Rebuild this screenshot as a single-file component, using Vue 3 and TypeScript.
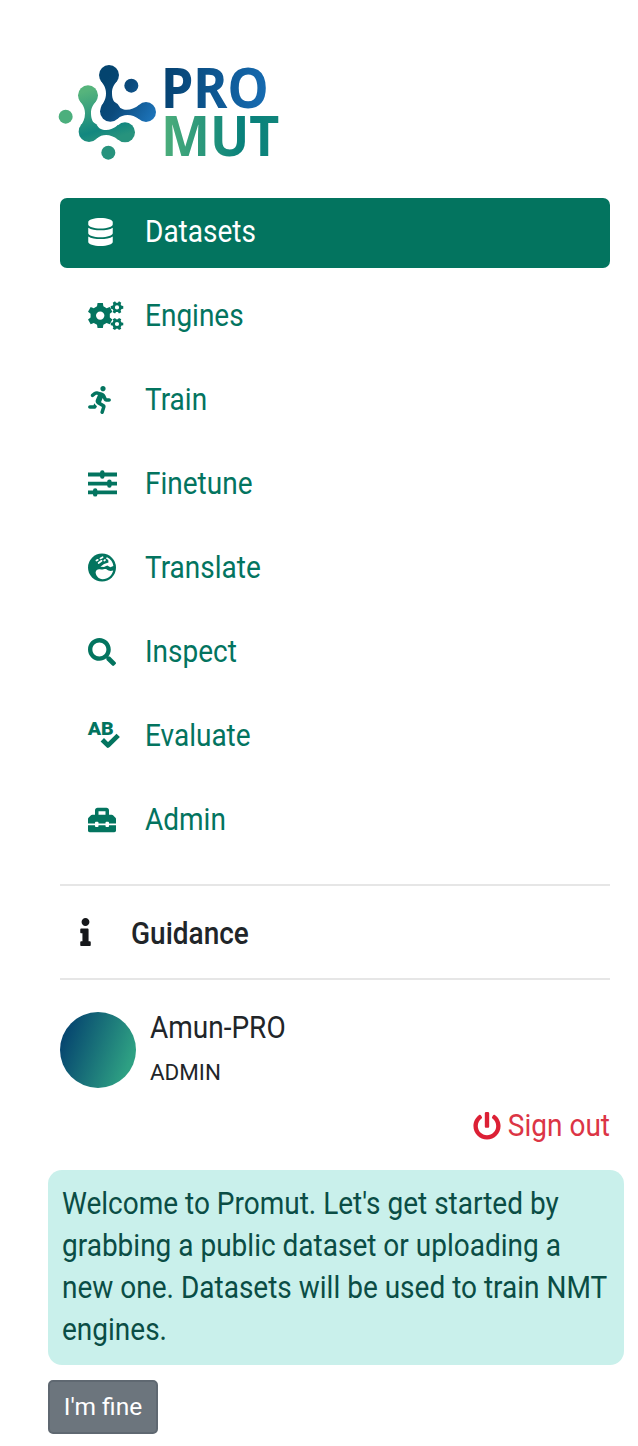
<script setup lang="ts">
interface NavItem {
  label: string
  icon: string
  width: number
  active?: boolean
}

const items: NavItem[] = [
  { label: 'Datasets', icon: 'database', width: 25, active: true },
  { label: 'Engines', icon: 'cogs', width: 35 },
  { label: 'Train', icon: 'running', width: 23 },
  { label: 'Finetune', icon: 'sliders', width: 29 },
  { label: 'Translate', icon: 'globe', width: 28 },
  { label: 'Inspect', icon: 'search', width: 28 },
  { label: 'Evaluate', icon: 'spell', width: 32 },
  { label: 'Admin', icon: 'toolbox', width: 28 },
]

const tipLines: string[] = [
  "Welcome to Promut. Let's get started by",
  'grabbing a public dataset or uploading a',
  'new one. Datasets will be used to train NMT',
  'engines.',
]

const viewBoxes: Record<string, string> = {
  database: '0 0 448 512',
  cogs: '0 0 35 28',
  running: '0 0 416 512',
  sliders: '0 0 29 28',
  globe: '0 0 28 28',
  search: '0 0 512 512',
  spell: '0 0 32 28',
  toolbox: '0 0 512 512',
}

const paths: Record<string, string> = {
  database:
    'M448 73.143v45.714C448 159.143 347.667 192 224 192S0 159.143 0 118.857V73.143C0 32.857 100.333 0 224 0s224 32.857 224 73.143zM448 176v102.857C448 319.143 347.667 352 224 352S0 319.143 0 278.857V176c48.125 33.143 136.208 48.572 224 48.572S399.874 209.143 448 176zm0 160v102.857C448 479.143 347.667 512 224 512S0 479.143 0 438.857V336c48.125 33.143 136.208 48.572 224 48.572S399.874 369.143 448 336z',
  running:
    'M272 96c26.51 0 48-21.49 48-48S298.51 0 272 0s-48 21.49-48 48 21.49 48 48 48zM113.69 317.47l-14.8 34.52H32c-17.67 0-32 14.33-32 32s14.33 32 32 32h77.45c19.25 0 36.58-11.44 44.11-29.09l8.79-20.52-10.67-6.3c-17.32-10.23-30.06-25.37-37.99-42.61zM384 223.99h-44.03l-26.06-53.25c-12.5-25.55-35.45-44.23-61.78-50.94l-71.08-21.14c-28.3-6.8-57.77-.55-80.84 17.14l-39.67 30.41c-14.03 10.75-16.69 30.83-5.92 44.86s30.84 16.66 44.86 5.92l39.69-30.41c7.67-5.89 17.44-8 25.27-6.14l14.7 4.37-37.46 87.39c-12.62 29.48-1.31 64.01 26.3 80.31l84.98 50.17-27.47 87.73c-5.28 16.86 4.11 34.82 20.97 40.09 3.19 1 6.41 1.48 9.58 1.48 13.61 0 26.23-8.77 30.52-22.45l31.64-101.06c5.91-20.77-2.89-43.08-21.64-54.39l-61.24-36.14 31.31-78.28 20.27 41.43c8 16.34 24.92 26.89 43.11 26.89H384c17.67 0 32-14.33 32-32s-14.33-31.99-32-31.99z',
  search:
    'M505 442.7L405.3 343c-4.5-4.5-10.6-7-17-7H372c27.6-35.3 44-79.7 44-128C416 93.1 322.9 0 208 0S0 93.1 0 208s93.1 208 208 208c48.3 0 92.7-16.4 128-44v16.3c0 6.4 2.5 12.5 7 17l99.7 99.7c9.4 9.4 24.6 9.4 33.9 0l28.3-28.3c9.4-9.4 9.4-24.6.1-34zM208 336c-70.7 0-128-57.2-128-128 0-70.7 57.2-128 128-128 70.7 0 128 57.2 128 128 0 70.7-57.2 128-128 128z',
  toolbox:
    'M502.63 214.63l-45.25-45.25c-6-6-14.14-9.37-22.63-9.37H384V80c0-26.51-21.49-48-48-48H176c-26.51 0-48 21.49-48 48v80H77.25c-8.49 0-16.62 3.37-22.63 9.37L9.37 214.63c-6 6-9.37 14.14-9.37 22.63V320h128v-16c0-8.84 7.16-16 16-16h32c8.84 0 16 7.16 16 16v16h128v-16c0-8.84 7.16-16 16-16h32c8.84 0 16 7.16 16 16v16h128v-82.75c0-8.48-3.37-16.62-9.37-22.62zM320 160H192V96h128v64zm64 208c0 8.84-7.16 16-16 16h-32c-8.84 0-16-7.16-16-16v-16H192v16c0 8.84-7.16 16-16 16h-32c-8.84 0-16-7.16-16-16v-16H0v96c0 17.67 14.33 32 32 32h448c17.67 0 32-14.33 32-32v-96H384v16z',
}

// Outline of a six-toothed gear with a round hole.
function gear(cx: number, cy: number, outer: number, inner: number, hole: number, turn: number): string {
  const pts: string[] = []
  for (let i = 0; i < 6; i++) {
    const base = turn + i * 60
    const corners: [number, number][] = [[-19, inner], [-12, outer], [12, outer], [19, inner]]
    for (const [a, r] of corners) {
      const t = ((base + a) * Math.PI) / 180
      pts.push(`${(cx + r * Math.cos(t)).toFixed(2)} ${(cy + r * Math.sin(t)).toFixed(2)}`)
    }
  }
  return `M${pts.join('L')}ZM${cx - hole} ${cy}a${hole} ${hole} 0 1 0 ${hole * 2} 0a${hole} ${hole} 0 1 0 ${-hole * 2} 0Z`
}

const gears = [gear(12.2, 13.6, 12.8, 9.8, 4.2, 30), gear(29, 5.4, 6.4, 4.8, 2.1, 0), gear(29, 22, 6.4, 4.8, 2.1, 0)].join('')
</script>

<template>
  <aside class="sidebar">
    <svg class="logo" viewBox="0 0 750 360" role="img" aria-label="PRO MUT">
      <defs>
        <linearGradient id="blue" gradientUnits="userSpaceOnUse" x1="165" y1="80" x2="335" y2="190">
          <stop offset="0.1" stop-color="#04446f" />
          <stop offset="0.45" stop-color="#0b4a7c" />
          <stop offset="1" stop-color="#1d74ba" />
        </linearGradient>
        <linearGradient id="green" gradientUnits="userSpaceOnUse" x1="120" y1="105" x2="170" y2="275">
          <stop offset="0.1" stop-color="#56b47c" />
          <stop offset="0.8" stop-color="#12877f" />
          <stop offset="1" stop-color="#27937d" />
        </linearGradient>
        <linearGradient id="pro" gradientUnits="userSpaceOnUse" x1="360" y1="80" x2="665" y2="130">
          <stop offset="0" stop-color="#064372" />
          <stop offset="1" stop-color="#166bb1" />
        </linearGradient>
        <linearGradient id="mut" gradientUnits="userSpaceOnUse" x1="360" y1="260" x2="700" y2="260">
          <stop offset="0" stop-color="#4bad7b" />
          <stop offset="0.7" stop-color="#07807b" />
          <stop offset="1" stop-color="#10857b" />
        </linearGradient>
      </defs>
      <g fill="url(#blue)">
        <circle cx="192" cy="75" r="30" />
        <circle cx="196" cy="184" r="31" />
        <circle cx="303" cy="186" r="30" />
        <path d="M166 91C178 106 183 116 183 130C183 148 176 158 169 168L196 190L218 206C234 192 260 190 283 208L283 164C262 181 239 183 225 173C206 160 201 146 201 130C201 113 206 105 218 91Z" />
        <circle cx="259" cy="107" r="21" />
      </g>
      <g fill="url(#green)">
        <circle cx="129" cy="136" r="30" />
        <circle cx="132" cy="245" r="31" />
        <circle cx="240" cy="247" r="30" />
        <path d="M103 151C116 167 120 177 120 190C120 207 114 219 106 228L132 251L156 265C172 251 197 251 219 269L219 225C199 242 177 244 161 233C142 220 138 205 138 190C138 175 143 166 155 151Z" />
        <circle cx="190" cy="308" r="21" />
      </g>
      <circle cx="62" cy="200" r="21" fill="#4caf7d" />
      <text x="348" y="175" class="word" textLength="323" lengthAdjust="spacingAndGlyphs" fill="url(#pro)">PRO</text>
      <text x="348" y="319" class="word" textLength="355" lengthAdjust="spacingAndGlyphs" fill="url(#mut)">MUT</text>
    </svg>

    <nav class="nav">
      <a v-for="item in items" :key="item.label" class="link" :class="{ active: item.active }">
        <span class="slot">
          <svg class="icon" :viewBox="viewBoxes[item.icon]" :width="item.width" height="28" fill="currentColor">
            <path v-if="paths[item.icon]" :d="paths[item.icon]" />
            <path v-else-if="item.icon === 'cogs'" :d="gears" fill-rule="evenodd" />
            <template v-else-if="item.icon === 'sliders'">
              <path d="M0 4.5H29M0 13.6H29M0 22.4H29" stroke="currentColor" stroke-width="3.8" />
              <path d="M14.3 2.5V6.5M21.4 11.6V15.6M7.2 20.4V24.4" stroke="currentColor" stroke-width="4.4" stroke-linecap="round" />
            </template>
            <template v-else-if="item.icon === 'globe'">
              <circle cx="14" cy="13.6" r="14" />
              <path d="M7.6 18.5C8 15.5 10.5 14.6 13 15.6C15.5 15.8 16.5 14.4 18.5 15.2C20.5 16.8 22.5 17.4 25.2 16.4C24 21.5 20 25 14.6 25.2C10.5 25 8 22 7.6 18.5Z" fill="#fff" />
              <path d="M12.4 12.8L16 10L20.5 8.4L20.2 6L17.8 4.2L19 3.2C22.6 4.8 25 8 25.4 12L22.4 13.2L19.2 11.6L16 13Z" fill="#fff" />
              <path d="M8.4 6.6L9.8 5.8M12.4 4.4L14.6 3.2M10.6 9L13.6 6.8M16.2 6.6L17 6" fill="none" stroke="#fff" stroke-width="1.7" stroke-linecap="round" />
            </template>
            <template v-else>
              <text x="-0.3" y="13.4" class="ab" textLength="26" lengthAdjust="spacingAndGlyphs">AB</text>
              <path d="M14.3 17.7L20 23.4L30.2 13.4" fill="none" stroke="currentColor" stroke-width="4.8" stroke-linejoin="round" />
            </template>
          </svg>
        </span>
        <span class="tall">{{ item.label }}</span>
      </a>
    </nav>

    <div class="guidance">
      <svg class="info" viewBox="0 0 192 512" width="11" height="28" fill="currentColor">
        <path d="M20 424.229h20V279.771H20c-11.046 0-20-8.954-20-20V212c0-11.046 8.954-20 20-20h112c11.046 0 20 8.954 20 20v212.229h20c11.046 0 20 8.954 20 20V492c0 11.046-8.954 20-20 20H20c-11.046 0-20-8.954-20-20v-47.771c0-11.046 8.954-20 20-20zM96 0C56.235 0 24 32.235 24 72s32.235 72 72 72 72-32.235 72-72S135.764 0 96 0z" />
      </svg>
      <span class="tall">Guidance</span>
    </div>

    <div class="user">
      <div class="avatar"></div>
      <div class="who">
        <div class="tall">Amun-PRO</div>
        <div class="role">ADMIN</div>
      </div>
    </div>

    <a class="signout">
      <svg viewBox="0 0 512 512" width="28" height="28" fill="currentColor">
        <path d="M400 54.1c63 45 104 118.6 104 201.9 0 136.8-110.8 247.7-247.5 248C120 504.3 8.2 393 8 256.4 7.9 173.1 48.9 99.3 111.8 54.2c11.7-8.3 28-4.8 35 7.7L162.6 90c5.9 10.5 3.1 23.8-6.6 31-41.5 30.8-68 79.6-68 134.9-.1 92.3 74.5 168.1 168 168.1 91.6 0 168.6-74.2 168-169.1-.3-51.8-24.7-101.8-68.1-134-9.7-7.2-12.4-20.5-6.5-30.9l15.8-28.1c7-12.4 23.2-16.1 34.8-7.8zM296 264V24c0-13.3-10.7-24-24-24h-32c-13.3 0-24 10.7-24 24v240c0 13.3 10.7 24 24 24h32c13.3 0 24-10.7 24-24z" />
      </svg>
      <span class="tall">Sign out</span>
    </a>

    <div class="tip">
      <div v-for="line in tipLines" :key="line" class="tall">{{ line }}</div>
    </div>
    <button class="dismiss" type="button">I'm fine</button>
  </aside>
</template>

<style>
body {
  background: #fff;
}
</style>

<style scoped>
.sidebar {
  box-sizing: border-box;
  width: 638px;
  height: 1446px;
  padding: 50px 28px 0 60px;
  font-family: Roboto, "Liberation Sans", sans-serif;
  font-size: 28px;
  line-height: 42px;
  color: #212529;
}
.tall {
  transform: translateY(1px) scaleY(1.09);
  transform-origin: 0 62%;
}
.logo {
  display: block;
  width: 250px;
  height: 120px;
  margin-left: -15px;
  overflow: visible;
}
.word {
  font-family: "Noto Sans", sans-serif;
  font-size: 166px;
  font-weight: 700;
}
.nav {
  display: flex;
  flex-direction: column;
  gap: 14px;
  margin-top: 28px;
}
.link {
  display: flex;
  align-items: center;
  box-sizing: border-box;
  height: 70px;
  padding: 0 28px 2px;
  border-radius: 7px;
  color: #03745f;
}
.link.active {
  background: #03745f;
  color: #fff;
}
.slot {
  display: flex;
  width: 57px;
}
.icon {
  display: block;
  overflow: visible;
}
.ab {
  font-family: Roboto, sans-serif;
  font-size: 18.5px;
  font-weight: 900;
}
.guidance {
  display: flex;
  align-items: center;
  box-sizing: border-box;
  height: 96px;
  margin-top: 28px;
  padding: 3px 0 0 20px;
  border-top: 2px solid #e6e6e6;
  border-bottom: 2px solid #e6e6e6;
  font-weight: 500;
}
.info {
  margin: -3px 40px 0 0;
  color: #16181b;
}
.user {
  display: flex;
  margin-top: 27px;
  height: 82px;
}
.avatar {
  width: 76px;
  height: 76px;
  margin-top: 5px;
  border-radius: 50%;
  background: linear-gradient(110deg, #05446f 10%, #2ea083 85%);
}
.who {
  margin-left: 14px;
}
.role {
  margin-top: 3px;
  font-size: 22.4px;
  line-height: 40px;
}
.signout {
  display: flex;
  justify-content: flex-end;
  align-items: center;
  gap: 7px;
  margin-top: 16px;
  height: 42px;
  color: #dc3545;
}
.signout svg {
  color: #dc2035;
}
.tip {
  box-sizing: border-box;
  width: 576px;
  height: 195px;
  margin: 23px 0 0 -12px;
  padding: 13px 14px;
  border-radius: 14px;
  background: #c9f0eb;
  color: #0a4d45;
  white-space: nowrap;
}
.dismiss {
  display: block;
  width: 110px;
  height: 54px;
  margin: 15px 0 0 -12px;
  padding: 0;
  border: 2px solid #5f6871;
  border-radius: 5px;
  background: #6c757d;
  color: #fff;
  font: 24.5px/36px Roboto, "Liberation Sans", sans-serif;
}
</style>
